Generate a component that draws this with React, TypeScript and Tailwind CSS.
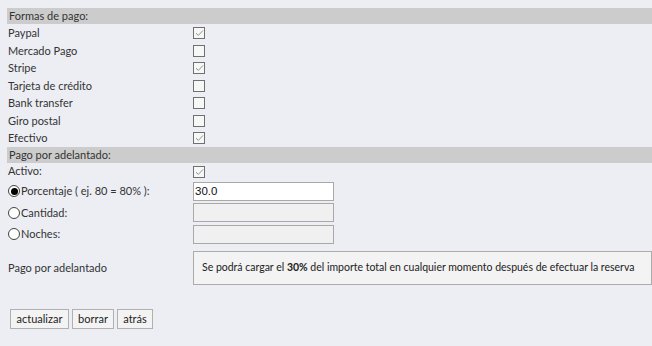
import React from "react";

const font = { fontFamily: "Lato, 'Liberation Sans', sans-serif" };

function Check({ checked }: { checked?: boolean }) {
  return (
    <span className="flex h-[12px] w-[12px] items-center justify-center border border-[#707070] bg-[#f7f7f7]">
      {checked && (
        <svg width="9" height="8" viewBox="0 0 9 8">
          <path d="M1 4.2 L3.4 6.4 L8 1.4" fill="none" stroke="#888" strokeWidth="0.9" />
        </svg>
      )}
    </span>
  );
}

function Radio({ checked }: { checked?: boolean }) {
  return (
    <span className="mr-[1px] flex h-[12px] w-[12px] items-center justify-center rounded-full border border-[#444] bg-white">
      {checked && <span className="h-[7px] w-[7px] rounded-full bg-black" />}
    </span>
  );
}

function Bar({ children }: { children: React.ReactNode }) {
  return <div className="flex h-[15.5px] items-center bg-[#cccccc] pl-[2px]">{children}</div>;
}

const methods: [string, boolean][] = [
  ["Paypal", true],
  ["Mercado Pago", false],
  ["Stripe", true],
  ["Tarjeta de crédito", false],
  ["Bank transfer", false],
  ["Giro postal", false],
  ["Efectivo", true],
];

const buttons: [string, string][] = [
  ["actualizar", "w-[59px]"],
  ["borrar", "w-[42px]"],
  ["atrás", "w-[36px]"],
];

export default function App() {
  return (
    <div className="min-h-[346px] w-[652px] bg-[#eceef3] pl-[7px] pt-[8px] text-[11px] text-[#333]" style={font}>
      <Bar>Formas de pago:</Bar>
      <div className="pt-[1px]">
        {methods.map(([name, on]) => (
          <div key={name} className="grid h-[17.5px] grid-cols-[186px_1fr] items-center">
            <span className="pl-[1px]">{name}</span>
            <Check checked={on} />
          </div>
        ))}
      </div>
      <Bar>Pago por adelantado:</Bar>
      <div className="grid h-[18px] grid-cols-[186px_1fr] items-center">
        <span className="pl-[1px]">Activo:</span>
        <Check checked />
      </div>
      {[
        ["Porcentaje ( ej. 80 = 80% ):", true, "30.0"],
        ["Cantidad:", false, ""],
        ["Noches:", false, ""],
      ].map(([label, on, val]) => (
        <div key={label as string} className="grid h-[21.5px] grid-cols-[186px_1fr] items-center">
          <span className="flex items-center pl-[1px]">
            <Radio checked={on as boolean} />
            {label as string}
          </span>
          <div
            className={
              "flex h-[19px] w-[141px] items-center border border-[#a9a9a9] px-[1px] text-[11.5px] text-[#111] " +
              (on ? "bg-white" : "bg-[#f0f0f0]")
            }
            style={{ fontFamily: "'Liberation Sans', Arial, sans-serif" }}
          >
            {val as string}
          </div>
        </div>
      ))}
      <div className="mt-[6px] grid grid-cols-[186px_1fr] items-center">
        <span className="pl-[1px]">Pago por adelantado</span>
        <div className="flex h-[34px] items-center overflow-hidden whitespace-nowrap border border-[#ababab] bg-[#f3f3f3] pl-[8px] text-[10.5px] text-[#222]">
          <span>
            Se podrá cargar el <b>30%</b> del importe total en cualquier momento después de efectuar la reserva
          </span>
        </div>
      </div>
      <div className="mt-[24px] flex gap-[3px] pl-[3px]">
        {buttons.map(([b, w]) => (
          <button
            key={b}
            className={"h-[20px] border border-[#b0b0b0] bg-[#f3f3f3] text-[11px] text-[#222] " + w}
          >
            {b}
          </button>
        ))}
      </div>
    </div>
  );
}
